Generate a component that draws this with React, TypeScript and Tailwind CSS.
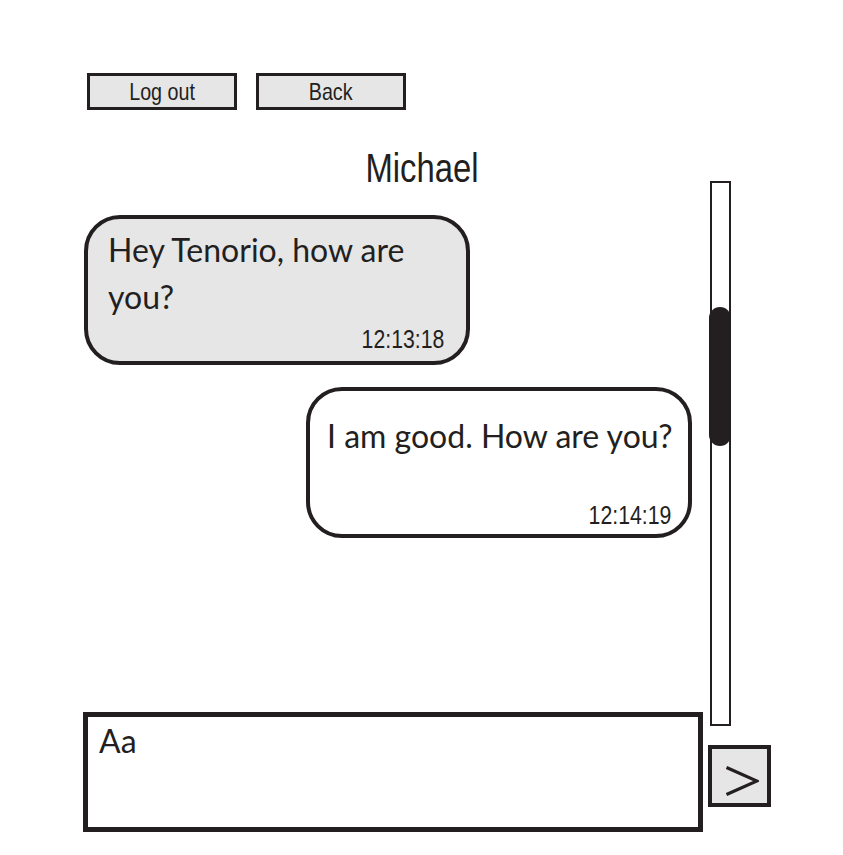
import React from 'react';

// Arial-narrow look: Liberation Sans squeezed horizontally
const arial = "font-['Liberation_Sans',Arial,sans-serif]";
// Myriad-like humanist text
const humanist = "font-['Lato','Open_Sans',sans-serif]";

const App: React.FC = () => {
  return (
    <div className="w-[843px] h-[855px] bg-white text-[#231f20]">
      {/* Top buttons */}
      <div className={`flex gap-[19px] pl-[87px] pt-[73px] ${arial}`}>
        <button className="w-[150px] h-[37px] border-[3px] border-[#231f20] bg-[#e6e6e6] text-[24px] leading-none">
          <span className="inline-block scale-x-[0.82]">Log out</span>
        </button>
        <button className="w-[150px] h-[37px] border-[3px] border-[#231f20] bg-[#e6e6e6] text-[24px] leading-none">
          <span className="inline-block scale-x-[0.82]">Back</span>
        </button>
      </div>

      <h1 className={`mt-[46px] text-center text-[40px] leading-[25px] ${arial}`}>
        <span className="inline-block scale-x-[0.82]">Michael</span>
      </h1>

      <div className="flex pl-[83px]">
        {/* Messages + input */}
        <div className="w-[620px] flex flex-col">
          <div className="mt-[34px] ml-[1px] w-[386px] h-[150px] rounded-[36px] border-4 border-[#231f20] bg-[#e6e6e6] flex flex-col justify-between pt-[7px] pb-[9px] pl-[20px] pr-[22px]">
            <p className={`w-[330px] text-[32px] leading-[47px] ${humanist}`}>Hey Tenorio, how are you?</p>
            <span className={`self-end inline-block origin-right scale-x-[0.85] text-[25px] leading-none ${arial}`}>12:13:18</span>
          </div>

          <div className="mt-[22px] ml-[223px] w-[386px] h-[151px] rounded-[36px] border-4 border-[#231f20] bg-white flex flex-col justify-between pt-[21px] pb-[6px] pl-[17px] pr-[17px]">
            <p className={`text-[32px] leading-[47px] whitespace-nowrap ${humanist}`}>I am good. How are you?</p>
            <span className={`self-end inline-block origin-right scale-x-[0.85] text-[25px] leading-none ${arial}`}>12:14:19</span>
          </div>

          <div className="mt-[174px] h-[120px] border-[5px] border-[#231f20] bg-white pl-[11px] pt-[4px]">
            <span className={`text-[32px] leading-[40px] ${humanist}`}>Aa</span>
          </div>
        </div>

        {/* Scrollbar + send */}
        <div className="ml-[5px] flex flex-col">
          <div className="relative ml-[2px] w-[21px] h-[545px] border-2 border-[#231f20] bg-white">
            <div className="absolute top-[124px] left-[-3px] w-[22px] h-[139px] rounded-full bg-[#231f20]" />
          </div>
          <button className="mt-[19px] w-[63px] h-[62px] border-4 border-[#231f20] bg-[#e6e6e6] flex items-center justify-center" aria-label="Send">
            <svg width="34" height="30" viewBox="0 0 34 30" className="mt-[9px] ml-[4px]">
              <polyline points="1.5,1.5 32,15 1.5,28.5" fill="none" stroke="#231f20" strokeWidth="3.2" />
            </svg>
          </button>
        </div>
      </div>
    </div>
  );
};

export default App;
